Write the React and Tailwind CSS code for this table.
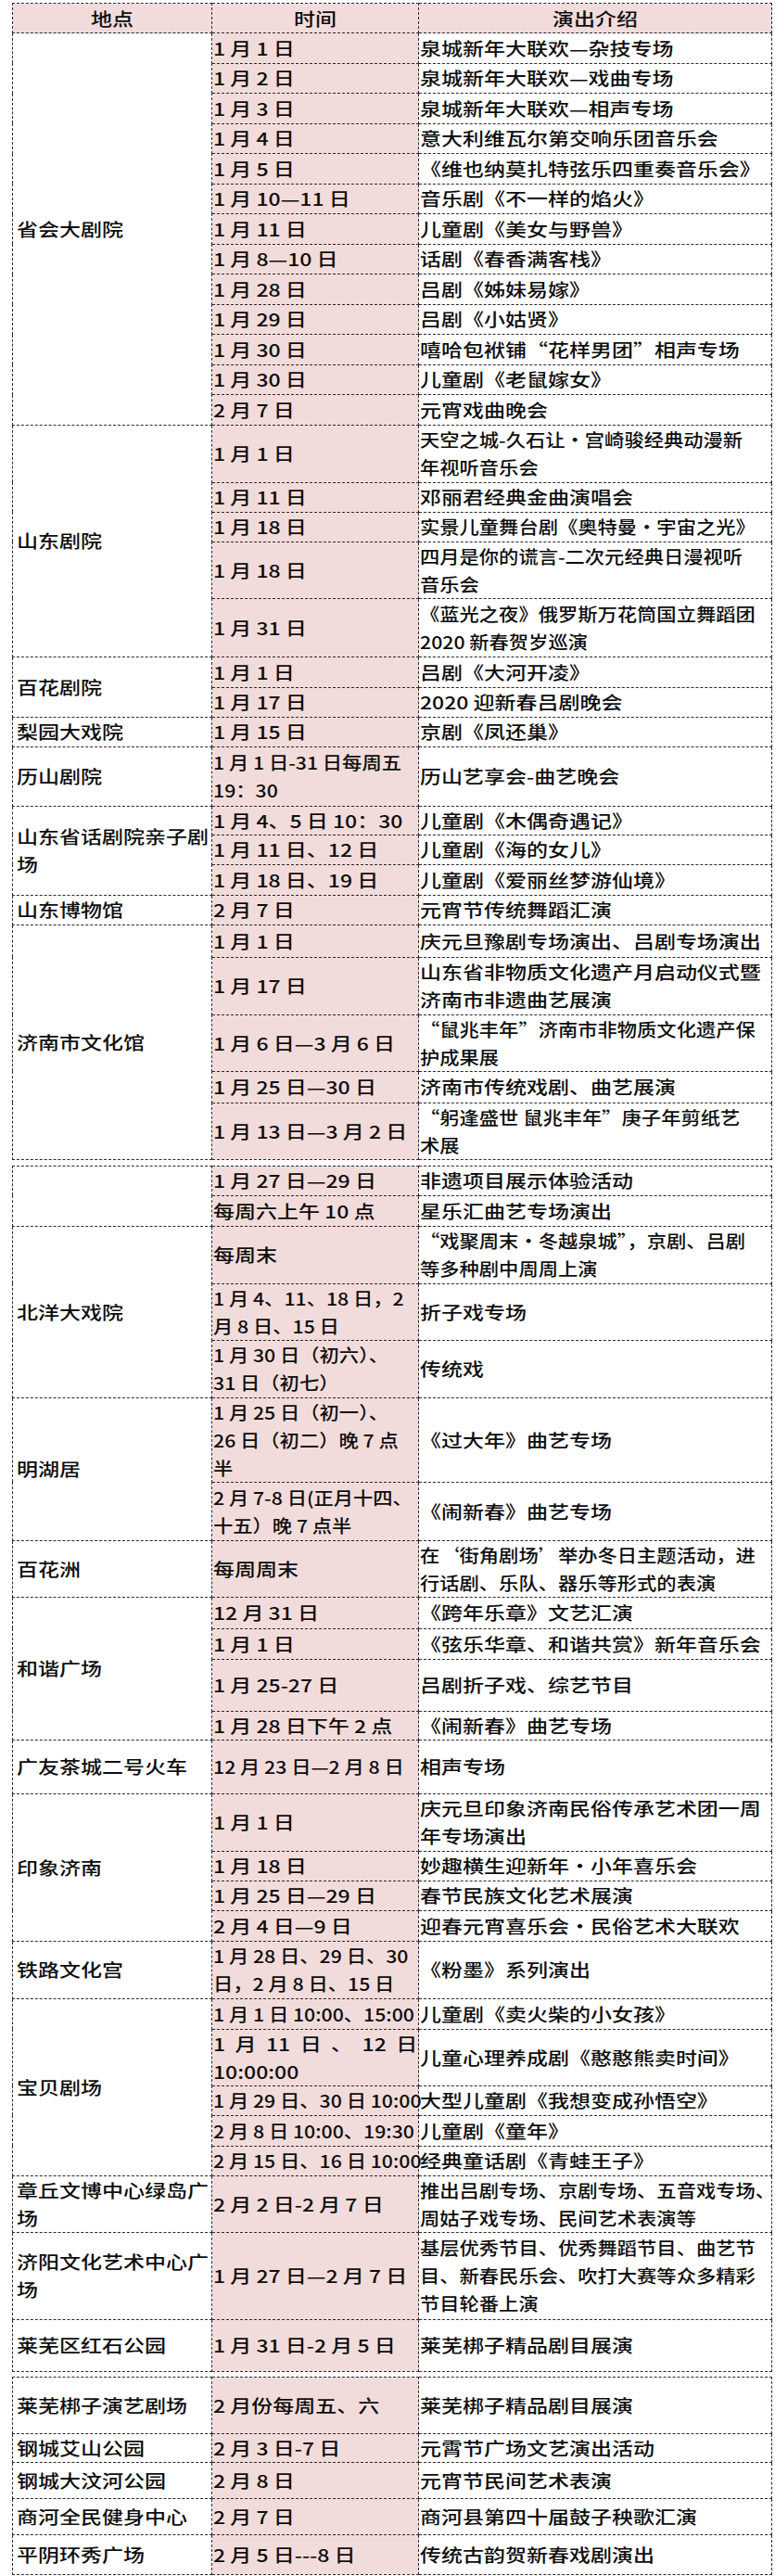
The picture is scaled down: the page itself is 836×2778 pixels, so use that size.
import React from "react";

const cell = "border border-dashed border-[#2a2a2a] p-0 align-middle";

function Txt({ lines, tight }) {
  return (
    <div
      className={
        (tight ? "scale-x-[1.12]" : "scale-x-[1.21]") +
        " origin-left whitespace-nowrap"
      }
    >
      {lines.map((l, i) => (
        <div key={i}>{l}</div>
      ))}
    </div>
  );
}

const spread = (
  <div className="flex justify-between w-[182px]">
    <span>1</span>
    <span>月</span>
    <span>11</span>
    <span>日</span>
    <span>、</span>
    <span>12</span>
    <span>日</span>
  </div>
);

const table1 = [
  {
    place: ["省会大剧院"],
    rows: [
      { h: "h-[32.5px]", t: ["1 月 1 日"], d: ["泉城新年大联欢—杂技专场"] },
      { h: "h-[32.5px]", t: ["1 月 2 日"], d: ["泉城新年大联欢—戏曲专场"] },
      { h: "h-[32.5px]", t: ["1 月 3 日"], d: ["泉城新年大联欢—相声专场"] },
      { h: "h-[32.5px]", t: ["1 月 4 日"], d: ["意大利维瓦尔第交响乐团音乐会"] },
      { h: "h-[32.5px]", t: ["1 月 5 日"], d: ["《维也纳莫扎特弦乐四重奏音乐会》"] },
      { h: "h-[32.5px]", t: ["1 月 10—11 日"], d: ["音乐剧《不一样的焰火》"] },
      { h: "h-[32.5px]", t: ["1 月 11 日"], d: ["儿童剧《美女与野兽》"] },
      { h: "h-[32.5px]", t: ["1 月 8—10 日"], d: ["话剧《春香满客栈》"] },
      { h: "h-[32.5px]", t: ["1 月 28 日"], d: ["吕剧《姊妹易嫁》"] },
      { h: "h-[32.5px]", t: ["1 月 29 日"], d: ["吕剧《小姑贤》"] },
      { h: "h-[32.5px]", t: ["1 月 30 日"], d: ["嘻哈包袱铺“花样男团”相声专场"] },
      { h: "h-[32.5px]", t: ["1 月 30 日"], d: ["儿童剧《老鼠嫁女》"] },
      { h: "h-[32.5px]", t: ["2 月 7 日"], d: ["元宵戏曲晚会"] },
    ],
  },
  {
    place: ["山东剧院"],
    rows: [
      { h: "h-[62px]", t: ["1 月 1 日"], d: ["天空之城-久石让·宫崎骏经典动漫新", "年视听音乐会"], dt: true },
      { h: "h-[32px]", t: ["1 月 11 日"], d: ["邓丽君经典金曲演唱会"] },
      { h: "h-[32px]", t: ["1 月 18 日"], d: ["实景儿童舞台剧《奥特曼·宇宙之光》"], dt: true },
      { h: "h-[61px]", t: ["1 月 18 日"], d: ["四月是你的谎言-二次元经典日漫视听", "音乐会"], dt: true },
      { h: "h-[63px]", t: ["1 月 31 日"], d: ["《蓝光之夜》俄罗斯万花筒国立舞蹈团", "2020 新春贺岁巡演"], dt: true },
    ],
  },
  {
    place: ["百花剧院"],
    rows: [
      { h: "h-[33px]", t: ["1 月 1 日"], d: ["吕剧《大河开凌》"] },
      { h: "h-[32px]", t: ["1 月 17 日"], d: ["2020 迎新春吕剧晚会"] },
    ],
  },
  {
    place: ["梨园大戏院"],
    rows: [{ h: "h-[32px]", t: ["1 月 15 日"], d: ["京剧《凤还巢》"] }],
  },
  {
    place: ["历山剧院"],
    rows: [
      { h: "h-[64px]", t: ["1 月 1 日-31 日每周五", "19：30"], tt: true, d: ["历山艺享会-曲艺晚会"] },
    ],
  },
  {
    place: ["山东省话剧院亲子剧", "场"],
    rows: [
      { h: "h-[31px]", t: ["1 月 4、5 日 10：30"], d: ["儿童剧《木偶奇遇记》"] },
      { h: "h-[32px]", t: ["1 月 11 日、12 日"], d: ["儿童剧《海的女儿》"] },
      { h: "h-[33px]", t: ["1 月 18 日、19 日"], d: ["儿童剧《爱丽丝梦游仙境》"] },
    ],
  },
  {
    place: ["山东博物馆"],
    rows: [{ h: "h-[32px]", t: ["2 月 7 日"], d: ["元宵节传统舞蹈汇演"] }],
  },
  {
    place: ["济南市文化馆"],
    rows: [
      { h: "h-[35px]", t: ["1 月 1 日"], d: ["庆元旦豫剧专场演出、吕剧专场演出"] },
      { h: "h-[62px]", t: ["1 月 17 日"], d: ["山东省非物质文化遗产月启动仪式暨", "济南市非遗曲艺展演"] },
      { h: "h-[61px]", t: ["1 月 6 日—3 月 6 日"], d: ["“鼠兆丰年”济南市非物质文化遗产保", "护成果展"], dt: true },
      { h: "h-[34px]", t: ["1 月 25 日—30 日"], d: ["济南市传统戏剧、曲艺展演"] },
      { h: "h-[61px]", t: ["1 月 13 日—3 月 2 日"], d: ["“躬逢盛世 鼠兆丰年”庚子年剪纸艺", "术展"], dt: true },
    ],
  },
];

const table2 = [
  {
    place: [""],
    rows: [
      { h: "h-[32px]", t: ["1 月 27 日—29 日"], d: ["非遗项目展示体验活动"] },
      { h: "h-[33px]", t: ["每周六上午 10 点"], d: ["星乐汇曲艺专场演出"] },
    ],
  },
  {
    place: ["北洋大戏院"],
    rows: [
      { h: "h-[62px]", t: ["每周末"], d: ["“戏聚周末•冬越泉城”，京剧、吕剧", "等多种剧中周周上演"], dt: true },
      { h: "h-[61px]", t: ["1 月 4、11、18 日，2", "月 8 日、15 日"], tt: true, d: ["折子戏专场"] },
      { h: "h-[62px]", t: ["1 月 30 日（初六）、", "31 日（初七）"], tt: true, d: ["传统戏"] },
    ],
  },
  {
    place: ["明湖居"],
    rows: [
      { h: "h-[90px]", t: ["1 月 25 日（初一）、", "26 日（初二）晚 7 点", "半"], tt: true, d: ["《过大年》曲艺专场"] },
      { h: "h-[63px]", t: ["2 月 7-8 日(正月十四、", "十五）晚 7 点半"], tt: true, d: ["《闹新春》曲艺专场"] },
    ],
  },
  {
    place: ["百花洲"],
    rows: [
      { h: "h-[61px]", t: ["每周周末"], d: ["在‘街角剧场’举办冬日主题活动，进", "行话剧、乐队、器乐等形式的表演"], dt: true },
    ],
  },
  {
    place: ["和谐广场"],
    rows: [
      { h: "h-[34px]", t: ["12 月 31 日"], d: ["《跨年乐章》文艺汇演"] },
      { h: "h-[33px]", t: ["1 月 1 日"], d: ["《弦乐华章、和谐共赏》新年音乐会"] },
      { h: "h-[56px]", t: ["1 月 25-27 日"], d: ["吕剧折子戏、综艺节目"] },
      { h: "h-[31px]", t: ["1 月 28 日下午 2 点"], d: ["《闹新春》曲艺专场"] },
    ],
  },
  {
    place: ["广友茶城二号火车"],
    rows: [{ h: "h-[58px]", t: ["12 月 23 日—2 月 8 日"], tt: true, d: ["相声专场"] }],
  },
  {
    place: ["印象济南"],
    rows: [
      { h: "h-[62px]", t: ["1 月 1 日"], d: ["庆元旦印象济南民俗传承艺术团一周", "年专场演出"] },
      { h: "h-[32px]", t: ["1 月 18 日"], d: ["妙趣横生迎新年•小年喜乐会"] },
      { h: "h-[32px]", t: ["1 月 25 日—29 日"], d: ["春节民族文化艺术展演"] },
      { h: "h-[33px]", t: ["2 月 4 日—9 日"], d: ["迎春元宵喜乐会·民俗艺术大联欢"] },
    ],
  },
  {
    place: ["铁路文化宫"],
    rows: [
      { h: "h-[62px]", t: ["1 月 28 日、29 日、30", "日，2 月 8 日、15 日"], tt: true, d: ["《粉墨》系列演出"] },
    ],
  },
  {
    place: ["宝贝剧场"],
    rows: [
      { h: "h-[33px]", t: ["1 月 1 日 10:00、15:00"], tt: true, d: ["儿童剧《卖火柴的小女孩》"] },
      { h: "h-[60px]", t: [spread, "10:00:00"], d: ["儿童心理养成剧《憨憨熊卖时间》"] },
      { h: "h-[32px]", t: ["1 月 29 日、30 日 10:00"], tt: true, d: ["大型儿童剧《我想变成孙悟空》"] },
      { h: "h-[33px]", t: ["2 月 8 日 10:00、19:30"], tt: true, d: ["儿童剧《童年》"] },
      { h: "h-[32px]", t: ["2 月 15 日、16 日 10:00"], tt: true, d: ["经典童话剧《青蛙王子》"] },
    ],
  },
  {
    place: ["章丘文博中心绿岛广", "场"],
    rows: [
      { h: "h-[61px]", t: ["2 月 2 日-2 月 7 日"], d: ["推出吕剧专场、京剧专场、五音戏专场、", "周姑子戏专场、民间艺术表演等"], dt: true },
    ],
  },
  {
    place: ["济阳文化艺术中心广", "场"],
    rows: [
      { h: "h-[94px]", t: ["1 月 27 日—2 月 7 日"], d: ["基层优秀节目、优秀舞蹈节目、曲艺节", "目、新春民乐会、吹打大赛等众多精彩", "节目轮番上演"], dt: true },
    ],
  },
  {
    place: ["莱芜区红石公园"],
    rows: [{ h: "h-[56px]", t: ["1 月 31 日-2 月 5 日"], d: ["莱芜梆子精品剧目展演"] }],
  },
];

const table3 = [
  { place: ["莱芜梆子演艺剧场"], rows: [{ h: "h-[61px]", t: ["2 月份每周五、六"], d: ["莱芜梆子精品剧目展演"] }] },
  { place: ["钢城艾山公园"], rows: [{ h: "h-[30px]", t: ["2 月 3 日-7 日"], d: ["元霄节广场文艺演出活动"] }] },
  { place: ["钢城大汶河公园"], rows: [{ h: "h-[39px]", t: ["2 月 8 日"], d: ["元宵节民间艺术表演"] }] },
  { place: ["商河全民健身中心"], rows: [{ h: "h-[39px]", t: ["2 月 7 日"], d: ["商河县第四十届鼓子秧歌汇演"] }] },
  { place: ["平阴环秀广场"], rows: [{ h: "h-[43px]", t: ["2 月 5 日---8 日"], d: ["传统古韵贺新春戏剧演出"] }] },
];

function Table({ groups, header, className }) {
  return (
    <table className={"table-fixed border-collapse w-[819px] ml-[13px] " + (className || "")}>
      <colgroup>
        <col className="w-[215px]" />
        <col className="w-[223px]" />
        <col className="w-[381px]" />
      </colgroup>
      <tbody>
        {header && (
          <tr className="h-[32px] bg-[#f2dcdb]">
            <td className={cell + " text-center"}>
              <div className="scale-x-[1.21]">地点</div>
            </td>
            <td className={cell + " text-center"}>
              <div className="scale-x-[1.21]">时间</div>
            </td>
            <td className={cell + " text-center"}>
              <div className="scale-x-[1.21]">演出介绍</div>
            </td>
          </tr>
        )}
        {groups.flatMap((g, gi) =>
          g.rows.map((r, ri) => (
            <tr key={gi + "-" + ri} className={r.h}>
              {ri === 0 && (
                <td rowSpan={g.rows.length} className={cell + " pl-[4px]"}>
                  <Txt lines={g.place} />
                </td>
              )}
              <td className={cell + " bg-[#f2dcdb] pl-[1px]"}>
                <Txt lines={r.t} tight={r.tt} />
              </td>
              <td className={cell + " pl-[1px]"}>
                <Txt lines={r.d} tight={r.dt} />
              </td>
            </tr>
          ))
        )}
      </tbody>
    </table>
  );
}

export default function App() {
  return (
    <div className="w-[836px] bg-white text-[#0d0d0d] text-[19px] leading-[30px] font-medium font-['Noto_Sans_CJK_SC','Noto_Sans',sans-serif] pt-[3px] overflow-hidden">
      <Table groups={table1} header />
      <Table groups={table2} className="mt-[6px]" />
      <Table groups={table3} className="mt-[5px]" />
      <div className="mt-[6px] ml-[13px] w-[797px] h-[2px] border-t border-dashed border-[#2a2a2a]" />
    </div>
  );
}
